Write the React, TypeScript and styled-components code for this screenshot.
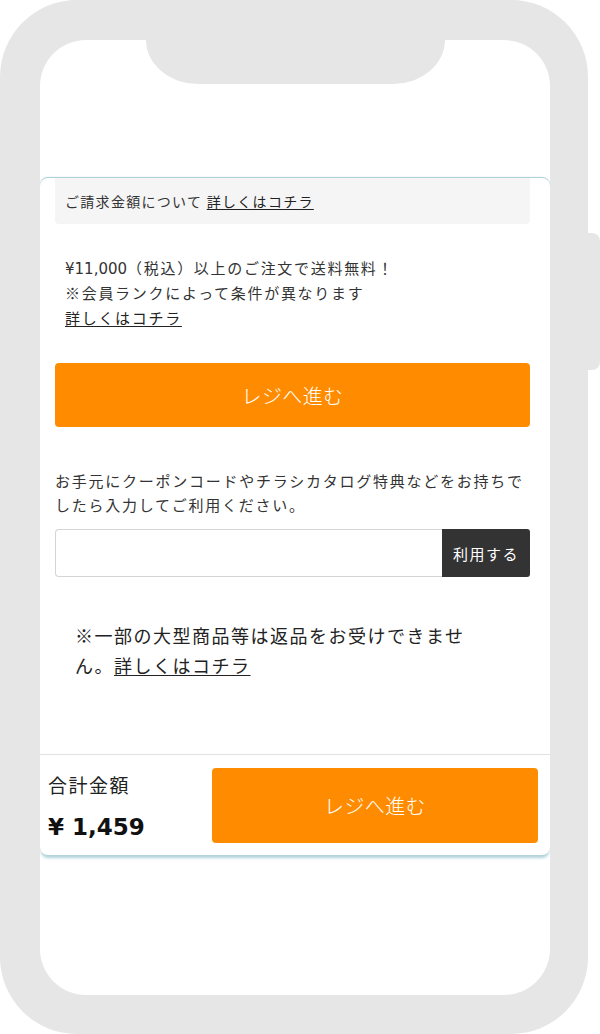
import React from 'react'
import styled, { createGlobalStyle } from 'styled-components'

const GlobalStyle = createGlobalStyle`
  html, body {
    margin: 0;
    padding: 0;
    background: #fff;
  }
  body {
    font-family: "Noto Sans CJK JP", sans-serif;
    color: #333;
  }
  * {
    box-sizing: border-box;
  }
`

const FRAME = '#e6e6e6'
const ORANGE = '#ff8c00'

const Stage = styled.div`
  display: flex;
  align-items: flex-start;
  width: 600px;
  height: 1034px;
`
const PhoneBody = styled.div`
  width: 588px;
  height: 1034px;
  padding: 40px 38px 39px 40px;
  background: ${FRAME};
  border-radius: 77px;
`
const SideButton = styled.div`
  width: 12px;
  height: 137px;
  margin-top: 233px;
  background: ${FRAME};
  border-radius: 0 8px 8px 0;
`
const Screen = styled.div`
  display: flex;
  flex-direction: column;
  height: 100%;
  background: #fff;
  border-radius: 46px;
  overflow: hidden;
`
const TopArea = styled.div`
  display: flex;
  justify-content: center;
  flex-shrink: 0;
  height: 138px;
`
const Notch = styled.div`
  width: 299px;
  height: 44px;
  background: ${FRAME};
  border-radius: 0 0 52px 52px / 0 0 44px 44px;
`
const Panel = styled.section`
  display: flex;
  flex-direction: column;
  flex-shrink: 0;
  height: 677px;
  background: #fff;
  border-radius: 8px;
  box-shadow: 0 -1px 1px rgba(150, 195, 205, .85),
              0 4px 3px -1px rgba(150, 195, 205, .75);
`
const Content = styled.div`
  display: flex;
  flex-direction: column;
  padding: 0 20px 0 15px;
`
const InfoBox = styled.div`
  display: flex;
  align-items: center;
  height: 46px;
  padding: 0 10px;
  background: #f5f5f5;
  border-radius: 0 0 4px 4px;
  font-size: 14px;
  letter-spacing: 1.3px;
`
const Link = styled.a`
  color: #222;
  text-decoration: underline;
  text-underline-offset: 2px;
  cursor: pointer;
`
const ShippingNote = styled.p`
  margin: 31px 0 0;
  padding-left: 10px;
  font-size: 15px;
  line-height: 25px;
  letter-spacing: 1.7px;
`
const Num = styled.span`
  font-family: "DejaVu Sans", sans-serif;
  line-height: 1;
  letter-spacing: 0;
`
const CheckoutButton = styled.button<{ $height: number }>`
  display: flex;
  align-items: center;
  justify-content: center;
  height: ${p => p.$height}px;
  border: none;
  border-radius: 4px;
  background: ${ORANGE};
  color: #fff;
  font-family: inherit;
  font-size: 20px;
  font-weight: 300;
  letter-spacing: .4px;
  cursor: pointer;
`
const MainCheckout = styled(CheckoutButton)`
  margin-top: 33px;
`
const CouponText = styled.p`
  margin: 42px 0 0;
  font-size: 15px;
  line-height: 24px;
  letter-spacing: 1.75px;
`
const CouponRow = styled.div`
  display: flex;
  height: 48px;
  margin-top: 12px;
`
const CouponInput = styled.input`
  flex: 1;
  min-width: 0;
  border: 1px solid #d4d4d4;
  border-right: none;
  border-radius: 4px 0 0 4px;
  outline: none;
`
const ApplyButton = styled.button`
  width: 88px;
  border: none;
  border-radius: 0 3px 3px 0;
  background: #333;
  color: #fff;
  font-family: inherit;
  font-size: 15px;
  letter-spacing: 1.5px;
`
const ReturnNotice = styled.p`
  width: 440px;
  margin: 43px 0 0;
  padding-left: 20px;
  font-size: 18px;
  line-height: 30px;
  letter-spacing: 1.5px;
  color: #222;
`
const BottomBar = styled.div`
  display: flex;
  margin-top: auto;
  padding: 13px 12px 12px 8px;
  border-top: 1px solid #e2e2e2;
`
const TotalBlock = styled.div`
  display: flex;
  flex-direction: column;
  width: 164px;
`
const TotalLabel = styled.div`
  margin-top: 2px;
  font-size: 19px;
  line-height: 30px;
  letter-spacing: 1.5px;
  color: #222;
`
const TotalPrice = styled.div`
  margin-top: 12px;
  font-family: "DejaVu Sans", sans-serif;
  font-size: 23px;
  font-weight: 700;
  line-height: 30px;
  color: #111;
`
const BarCheckout = styled(CheckoutButton)`
  flex: 1;
`

const App = (): JSX.Element => (
  <>
    <GlobalStyle />
    <Stage>
      <PhoneBody>
        <Screen>
          <TopArea>
            <Notch />
          </TopArea>
          <Panel>
            <Content>
              <InfoBox>
                ご請求金額について&nbsp;<Link>詳しくはコチラ</Link>
              </InfoBox>
              <ShippingNote>
                <Num>¥11,000</Num>（税込）以上のご注文で送料無料！<br />
                ※会員ランクによって条件が異なります<br />
                <Link>詳しくはコチラ</Link>
              </ShippingNote>
              <MainCheckout $height={64}>レジへ進む</MainCheckout>
              <CouponText>
                お手元にクーポンコードやチラシカタログ特典などをお持ちでしたら入力してご利用ください。
              </CouponText>
              <CouponRow>
                <CouponInput type={'text'} />
                <ApplyButton>利用する</ApplyButton>
              </CouponRow>
              <ReturnNotice>
                ※一部の大型商品等は返品をお受けできません。<Link>詳しくはコチラ</Link>
              </ReturnNotice>
            </Content>
            <BottomBar>
              <TotalBlock>
                <TotalLabel>合計金額</TotalLabel>
                <TotalPrice>¥ 1,459</TotalPrice>
              </TotalBlock>
              <BarCheckout $height={75}>レジへ進む</BarCheckout>
            </BottomBar>
          </Panel>
        </Screen>
      </PhoneBody>
      <SideButton />
    </Stage>
  </>
)

export default App
